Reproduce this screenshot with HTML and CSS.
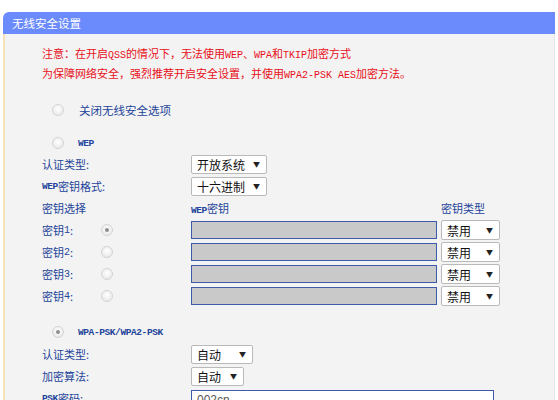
FILE: index.html
```html
<!DOCTYPE html>
<html lang="zh-CN">
<head>
<meta charset="utf-8">
<title>无线安全设置</title>
<link rel="stylesheet" href="styles.css">
</head>
<body>
<div class="panel">
  <div class="panel-head">无线安全设置</div>
  <div class="panel-body">
    <div class="notice">
      <p>注意：在开启<span class="lat">QSS</span>的情况下，无法使用<span class="lat">WEP</span>、<span class="lat">WPA</span>和<span class="lat">TKIP</span>加密方式</p>
      <p>为保障网络安全，强烈推荐开启安全设置，并使用<span class="lat">WPA2-PSK AES</span>加密方法。</p>
    </div>

    <div class="opt opt-first"><span class="radio"></span><span class="opt-label">关闭无线安全选项</span></div>

    <div class="opt opt-wep"><span class="radio"></span><span class="opt-label small">WEP</span></div>
    <div class="row">
      <span class="label">认证类型:</span>
      <div class="select w76"><span>开放系统</span><i>▼</i></div>
    </div>
    <div class="row">
      <span class="label"><span class="small">WEP</span>密钥格式:</span>
      <div class="select w76"><span>十六进制</span><i>▼</i></div>
    </div>
    <div class="row">
      <span class="label">密钥选择</span>
      <span class="col-key"><span class="small">WEP</span>密钥</span>
      <span class="col-type">密钥类型</span>
    </div>
    <div class="row">
      <span class="label keylabel">密钥<span class="lat">1</span>:<span class="radio on"></span></span>
      <span class="keyinput"></span>
      <div class="select w59"><span>禁用</span><i>▼</i></div>
    </div>
    <div class="row">
      <span class="label keylabel">密钥<span class="lat">2</span>:<span class="radio"></span></span>
      <span class="keyinput"></span>
      <div class="select w59"><span>禁用</span><i>▼</i></div>
    </div>
    <div class="row">
      <span class="label keylabel">密钥<span class="lat">3</span>:<span class="radio"></span></span>
      <span class="keyinput"></span>
      <div class="select w59"><span>禁用</span><i>▼</i></div>
    </div>
    <div class="row">
      <span class="label keylabel">密钥<span class="lat">4</span>:<span class="radio"></span></span>
      <span class="keyinput"></span>
      <div class="select w59"><span>禁用</span><i>▼</i></div>
    </div>

    <div class="opt opt-wpa"><span class="radio on"></span><span class="opt-label small">WPA-PSK/WPA2-PSK</span></div>
    <div class="row">
      <span class="label">认证类型:</span>
      <div class="select w62"><span>自动</span><i>▼</i></div>
    </div>
    <div class="row">
      <span class="label">加密算法:</span>
      <div class="select w53"><span>自动</span><i>▼</i></div>
    </div>
    <div class="row">
      <span class="label"><span class="small">PSK</span>密码:</span>
      <span class="pskinput">002cn</span>
    </div>
  </div>
</div>
</body>
</html>
```

FILE: styles.css
```css
html, body {
  margin: 0;
  padding: 0;
  background: #ffffff;
  font-family: "Noto Sans CJK SC", "Liberation Sans", sans-serif;
  font-size: 11px;
  height: 400px;
  overflow: hidden;
}
.panel {
  margin: 12px 0 0 3px;
  width: 552px;
}
.panel-head {
  height: 22px;
  line-height: 22px;
  background: #6b8bfd;
  color: #ffffff;
  padding-left: 9px;
  border-top-left-radius: 6px;
  font-size: 11.5px;
}
.panel-body {
  background: #f3f3f3;
  border-left: 2px solid #f6e2b8;
  border-right: 1px solid #e6e6e6;
  padding: 9px 0 20px 37px;
  height: 400px;
}
.notice p {
  margin: 0;
  height: 20px;
  line-height: 20px;
  color: #e8101a;
  font-size: 11px;
}
.lat {
  font-family: "Liberation Mono", monospace;
  font-size: 10px;
}
.small {
  font-family: "Liberation Mono", monospace;
  font-size: 9.5px;
  font-weight: bold;
  letter-spacing: -0.4px;
}
.opt {
  display: flex;
  align-items: center;
  height: 22px;
  color: #23449a;
}
.opt .radio {
  margin-left: 10px;
}
.opt-label {
  margin-left: 14px;
}
.opt-first { margin-top: 16px; font-size: 11.5px; }
.opt-first .opt-label { margin-left: 15px; }
.opt-wep { margin-top: 12px; height: 20px; }
.opt-wpa { margin-top: 14px; }
.radio {
  display: inline-block;
  width: 10px;
  height: 10px;
  border-radius: 50%;
  border: 1px solid #d4d4d4;
  background: radial-gradient(circle at 50% 40%, #ffffff 0%, #ececec 70%, #e0e0e0 100%);
  position: relative;
}
.radio.on::after {
  content: "";
  position: absolute;
  left: 3px;
  top: 3px;
  width: 4px;
  height: 4px;
  border-radius: 50%;
  background: #8e8e8e;
}
.row {
  display: flex;
  align-items: center;
  height: 22px;
  color: #23449a;
}
.label {
  width: 149px;
  flex: none;
  display: flex;
  align-items: center;
}
.keylabel .radio {
  margin-left: 28px;
}
.col-key {
  width: 250px;
  flex: none;
}
.select {
  box-sizing: border-box;
  height: 19px;
  background: #ffffff;
  border: 1px solid #b9b9b9;
  border-radius: 2px;
  display: flex;
  align-items: center;
  justify-content: space-between;
  padding: 0 6px 0 5px;
  color: #111111;
  font-size: 12px;
  flex: none;
}
.select i {
  font-style: normal;
  font-size: 7px;
  color: #222;
}
.w76 { width: 76px; }
.w59 { width: 59px; height: 20px; }
.w62 { width: 62px; }
.w53 { width: 53px; }
.keyinput {
  box-sizing: border-box;
  width: 246px;
  height: 18px;
  background: #c9c9c9;
  border: 1px solid #3d5ba8;
  margin-right: 4px;
  flex: none;
}
.pskinput {
  box-sizing: border-box;
  width: 303px;
  height: 20px;
  margin-top: 4px;
  background: #ffffff;
  border: 1px solid #3d5ba8;
  color: #555;
  font-family: "Liberation Sans", sans-serif;
  font-size: 12px;
  padding-left: 5px;
  line-height: 18px;
  flex: none;
}
```
